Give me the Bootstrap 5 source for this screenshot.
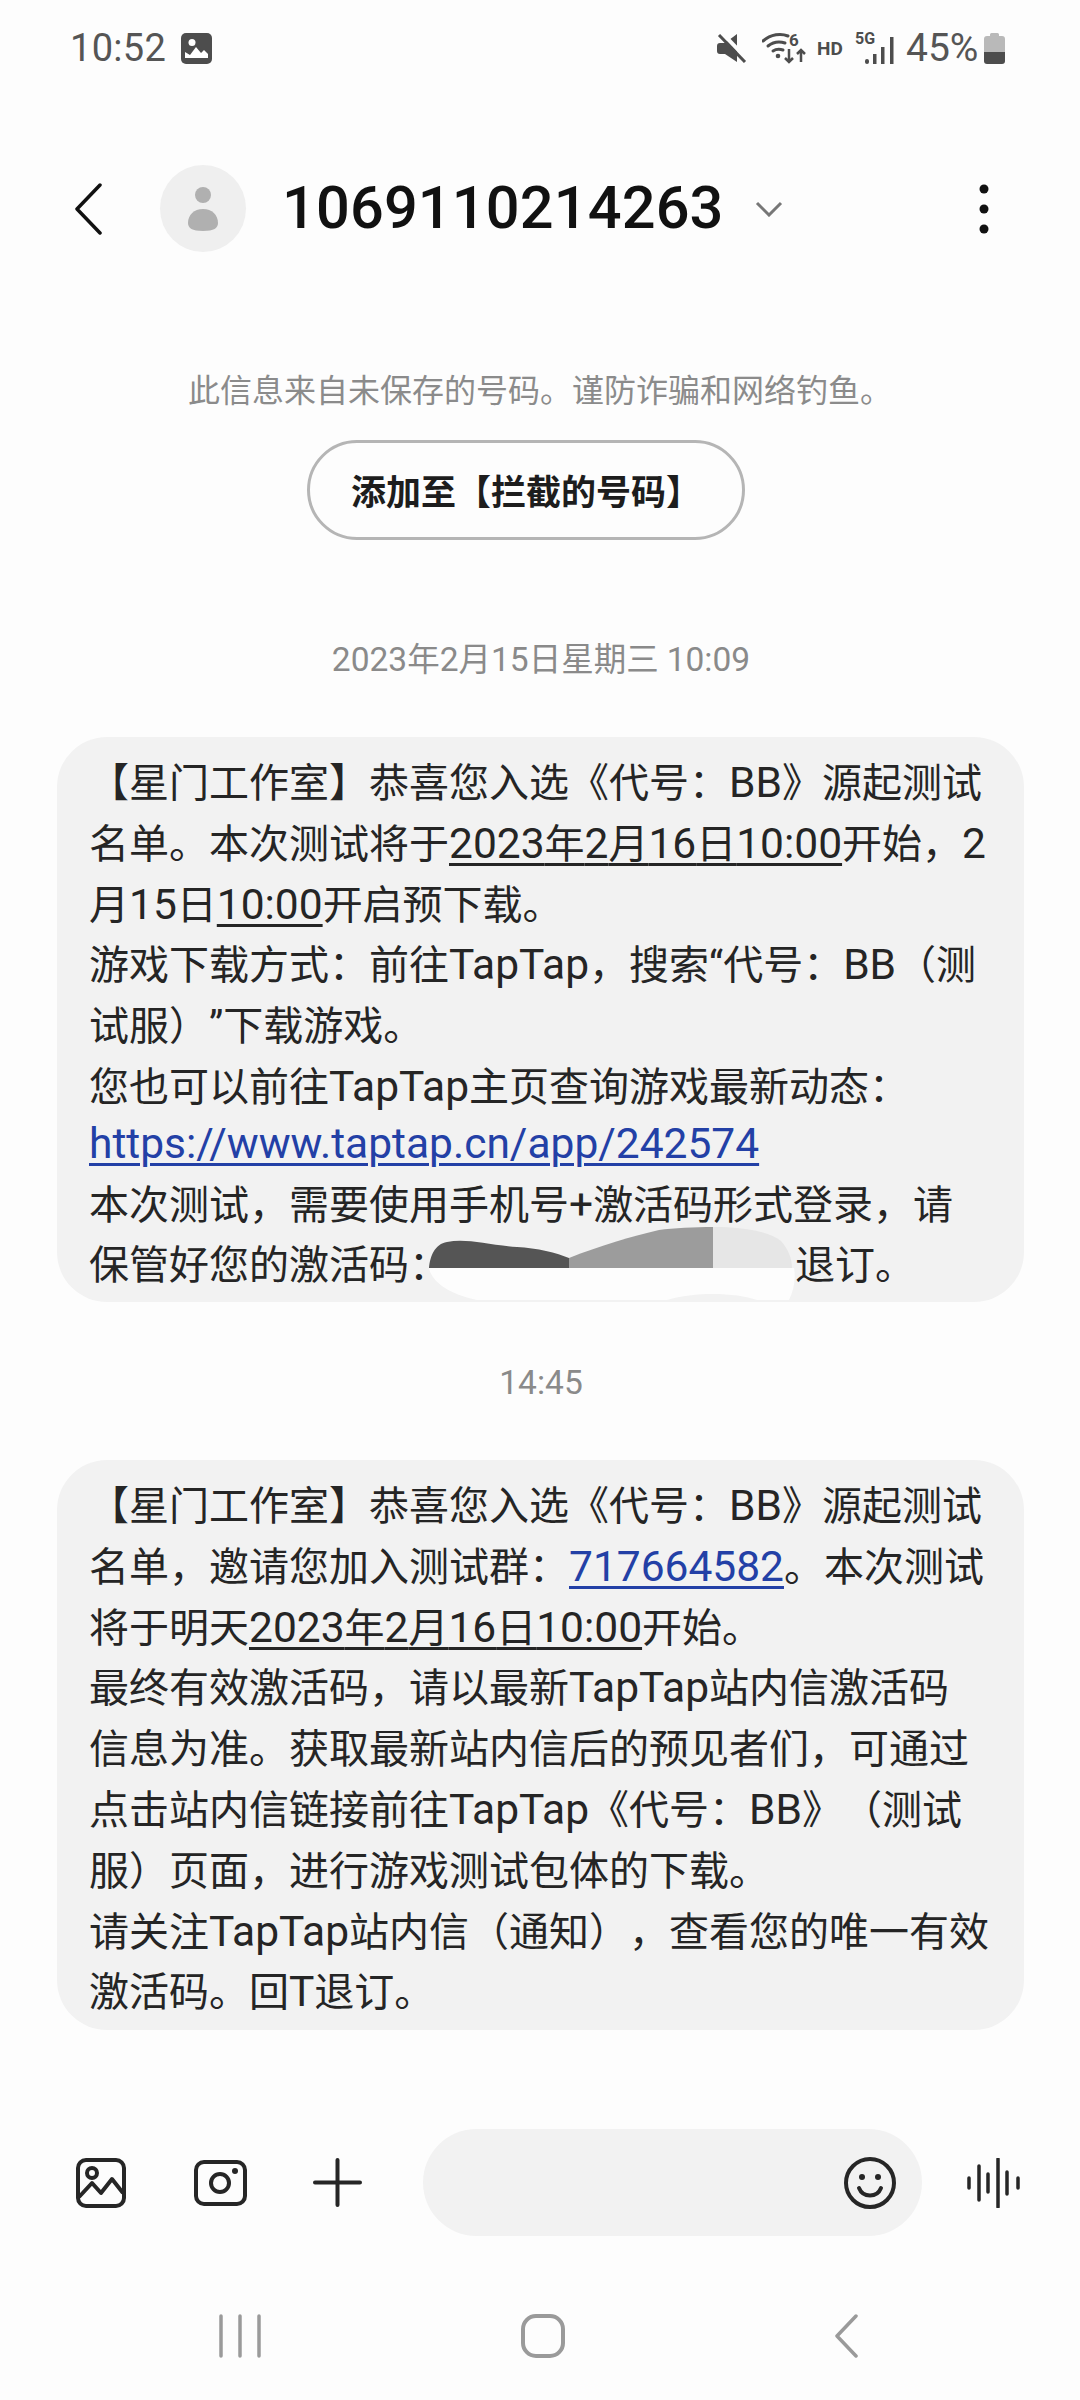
<!DOCTYPE html>
<html lang="zh-CN">
<head>
<meta charset="utf-8">
<link rel="stylesheet" href="https://cdn.jsdelivr.net/npm/bootstrap@5.3.0/dist/css/bootstrap.min.css">
<style>
html,body{margin:0;background:#fdfdfd;}
body{width:1080px;height:2400px;overflow:hidden;font-family:Roboto,"Noto Sans CJK SC",sans-serif;color:#252525;text-spacing-trim:space-all;}
svg{display:block;flex:none;}
.status-row{height:96px;padding-left:70px;padding-right:75px;color:#555;}
.status-time{font-size:38px;line-height:1;width:88px;margin-top:-1px;letter-spacing:.3px;}
.status-pct{font-size:39px;line-height:1;width:69px;}
.head-row{height:87px;margin-top:69px;padding-left:74px;}
.avatar-dot{width:86px;height:87px;background:#efefef;margin-left:58px;}
.head-title{font-size:59.5px;font-weight:500;line-height:1;color:#111;margin-left:36px;width:439px;letter-spacing:.15px;}
.warn-text{margin-top:119px;font-size:32px;line-height:40px;color:#8b8b8b;text-align:center;}
.block-wrap{margin-top:29px;padding-left:307px;}
.block-btn{width:438px;height:100px;border:3px solid #b5b5b5;border-radius:50px;background:#fdfdfd;font-size:35px;font-weight:700;color:#1d1d1d;padding:9px 0 0;}
.stamp{font-size:32.500px;line-height:40px;color:#8a8a8a;text-align:center;padding:2px 0 0 2px;margin-bottom:-2px;}
.stamp .latin-run{font-size:33.500px;}
.stamp-one{margin-top:98px;}
.stamp-two{margin-top:59px;}
.bubble{margin:59px 56px 0 57px;padding:17px 10px 0 32px;border-radius:50px;background:#f2f2f2;font-size:40px;line-height:60.8px;white-space:nowrap;height:565px;}
.bubble-two{height:570px;}
.latin-run{font-size:42.500px;line-height:0;}
.sms-tail{margin-top:-4px;}
.bubble u{text-underline-offset:5px;text-decoration-thickness:3px;}
.sms-link{color:#2340a6;text-underline-offset:5px;text-decoration-thickness:3px;}
.scribble{position:absolute;left:0;top:0;}
.compose-row{margin-top:99px;height:107px;padding-left:76px;}
.compose-field{width:499px;height:107px;background:#f2f2f2;border-radius:54px;padding-right:26px;margin-left:61px;}
.nav-row{margin-top:78px;height:44px;padding-left:218px;}
</style>
</head>
<body>
<div class="position-relative" style="height:2400px">
  <div class="status-row d-flex align-items-center">
    <span class="status-time">10:52</span>
    <svg style="margin-left:23px" width="31" height="31" viewBox="0 0 31 31"><rect width="31" height="31" rx="5" fill="#4d4d4d"/><circle cx="11" cy="9.500" r="3.500" fill="#fff"/><path d="M4 25v-6l5 3 6-8 5 6 3-3 4 4v4z" fill="#fff"/></svg>
    <div class="flex-grow-1"></div>
    <svg width="30" height="29" viewBox="0 0 30 29"><path d="M0 12a3 3 0 0 1 3-3h5L20 0v28L8 20H3a3 3 0 0 1-3-3z" fill="#4d4d4d"/><path d="M6 0l24 25" stroke="#fdfdfd" stroke-width="4"/><path d="M2 1l26 27" stroke="#4d4d4d" stroke-width="3"/></svg>
    <svg style="margin-left:15px" width="45" height="32" viewBox="0 0 45 32"><g fill="none" stroke="#4d4d4d" stroke-width="3" stroke-linecap="round"><path d="M1 9C9 2 19 1 26 4"/><path d="M6 14c5-4 11-5 17-3"/><path d="M11 19c3-2 7-2 10-1"/></g><circle cx="16" cy="24" r="2.300" fill="#4d4d4d"/><text x="27" y="14" font-size="17" font-weight="700" fill="#4d4d4d" font-family="Roboto">6</text><path d="M27 17v13m-4-4 4 4 4-4M39 30V18m-4 4 4-4 4 4" fill="none" stroke="#4d4d4d" stroke-width="2.500"/></svg>
    <span style="margin-left:10px;width:27px;font-size:19px;font-weight:700;line-height:1;color:#4d4d4d">HD</span>
    <div class="position-relative" style="margin-left:12px;width:38px;height:31px">
      <span class="position-absolute" style="left:-1px;top:-2px;font-size:16px;font-weight:700;line-height:1;color:#4d4d4d">5G</span>
      <svg class="position-absolute" style="left:9px;top:4px" width="29" height="27" viewBox="0 0 29 27"><g fill="#4d4d4d"><rect y="22" width="4" height="5" rx="2"/><rect x="8" y="17" width="3.500" height="10"/><rect x="16" y="10" width="3.500" height="17"/><rect x="25" width="3.500" height="27"/></g></svg>
    </div>
    <span class="status-pct" style="margin-left:12px">45%</span>
    <svg style="margin-left:9px" width="21" height="31" viewBox="0 0 21 31"><path d="M6 3V1.500A1.500 1.500 0 0 1 7.500 0h6A1.500 1.500 0 0 1 15 1.500V3h3a3 3 0 0 1 3 3v14H0V6a3 3 0 0 1 3-3z" fill="#b9b9b9"/><path d="M0 19h21v9a3 3 0 0 1-3 3H3a3 3 0 0 1-3-3z" fill="#4d4d4d"/></svg>
  </div>

  <div class="head-row d-flex align-items-center">
    <svg width="28" height="52" viewBox="0 0 28 52"><path d="M26 2 3 26l23 24" fill="none" stroke="#111" stroke-width="3.500" stroke-linecap="round" stroke-linejoin="round"/></svg>
    <div class="avatar-dot rounded-circle d-flex align-items-center justify-content-center">
      <svg width="32" height="44" viewBox="0 0 32 44"><g fill="#b0b0b0"><circle cx="16" cy="8" r="8"/><path d="M16 22c9 0 15 6 15 14 0 5-4 8-15 8S1 41 1 36c0-8 6-14 15-14z"/></g></svg>
    </div>
    <div class="head-title">1069110214263</div>
    <svg style="margin-left:34px" width="28" height="16" viewBox="0 0 28 16"><path d="M2 2l12 12L26 2" fill="none" stroke="#777" stroke-width="3"/></svg>
    <svg style="margin-left:196px" width="10" height="50" viewBox="0 0 10 50"><g fill="#111"><circle cx="5" cy="5" r="4.500"/><circle cx="5" cy="25" r="4.500"/><circle cx="5" cy="45" r="4.500"/></g></svg>
  </div>

  <div class="warn-text">此信息来自未保存的号码。谨防诈骗和网络钓鱼。</div>
  <div class="block-wrap"><button type="button" class="btn block-btn">添加至【拦截的号码】</button></div>

  <div class="stamp stamp-one"><span class="latin-run">2023</span>年<span class="latin-run">2</span>月<span class="latin-run">15</span>日星期三 <span class="latin-run">10:09</span></div>

  <div class="bubble position-relative">
    【星门工作室】恭喜您入选《代号：<span class="latin-run">BB</span>》源起测试<br>
    名单。本次测试将于<u><span class="latin-run">2023</span>年<span class="latin-run">2</span>月<span class="latin-run">16</span>日<span class="latin-run">10:00</span></u>开始，<span class="latin-run">2</span><br>
    月<span class="latin-run">15</span>日<u><span class="latin-run">10:00</span></u>开启预下载。<br>
    游戏下载方式：前往<span class="latin-run">TapTap</span>，搜索“代号：<span class="latin-run">BB</span>（测<br>
    试服）”下载游戏。<br>
    您也可以前往<span class="latin-run">TapTap</span>主页查询游戏最新动态：
    <div class="sms-tail">
    <a class="sms-link latin-run" href="#">https://www.taptap.cn/app/242574</a><br>
    本次测试，需要使用手机号<span class="latin-run">+</span>激活码形式登录，请<br>
    保管好您的激活码：<span class="d-inline-block" style="width:346px"></span>退订。
    </div>
    <svg class="scribble" width="967" height="565" viewBox="0 0 967 565"><path d="M372 531c1-12 6-24 18-26 20-4 40 3 70 5 20 1 40 6 52 11v10z" fill="#555"/><path d="M512 521c30-12 64-22 90-28 14-2 36-3 54-3v41H512z" fill="#9c9c9c"/><path d="M656 490c30 0 55 4 68 14 7 8 11 17 11 27h-79z" fill="#e6e6e6"/><path d="M372 531h365c2 10 0 22-5 32H700c-20-7-60-9-90 0H420c-30-6-46-20-48-32z" fill="#fdfdfd"/></svg>
  </div>

  <div class="stamp stamp-two"><span class="latin-run">14:45</span></div>

  <div class="bubble bubble-two">
    【星门工作室】恭喜您入选《代号：<span class="latin-run">BB</span>》源起测试<br>
    名单，邀请您加入测试群：<a class="sms-link latin-run" href="#">717664582</a>。本次测试<br>
    将于明天<u><span class="latin-run">2023</span>年<span class="latin-run">2</span>月<span class="latin-run">16</span>日<span class="latin-run">10:00</span></u>开始。<br>
    最终有效激活码，请以最新<span class="latin-run">TapTap</span>站内信激活码<br>
    信息为准。获取最新站内信后的预见者们，可通过<br>
    点击站内信链接前往<span class="latin-run">TapTap</span>《代号：<span class="latin-run">BB</span>》（测试<br>
    服）页面，进行游戏测试包体的下载。<br>
    请关注<span class="latin-run">TapTap</span>站内信（通知），查看您的唯一有效<br>
    激活码。回<span class="latin-run">T</span>退订。
  </div>

  <div class="compose-row d-flex align-items-center">
    <svg width="50" height="50" viewBox="0 0 50 50"><g fill="none" stroke="#262626" stroke-width="4" stroke-linejoin="round"><rect x="2" y="2" width="46" height="46" rx="8"/><circle cx="16" cy="15" r="5"/><path d="M3 39l13-14 9 10 11-14 11 14"/></g></svg>
    <svg style="margin-left:68px" width="53" height="46" viewBox="0 0 53 46"><g fill="none" stroke="#262626" stroke-width="4"><rect x="2" y="2" width="49" height="42" rx="8"/><circle cx="26" cy="23" r="9"/></g><circle cx="41" cy="11" r="3" fill="#262626"/></svg>
    <svg style="margin-left:66px" width="49" height="49" viewBox="0 0 49 49"><path d="M24.500 2v45M2 24.500h45" stroke="#262626" stroke-width="4" stroke-linecap="round"/></svg>
    <div class="compose-field d-flex align-items-center justify-content-end">
      <svg width="52" height="52" viewBox="0 0 52 52"><g fill="none" stroke="#262626" stroke-width="4"><circle cx="26" cy="26" r="24"/><path d="M15 31c4 10 18 10 22 0" stroke-linecap="round"/></g><circle cx="18" cy="20" r="3" fill="#262626"/><circle cx="34" cy="20" r="3" fill="#262626"/></svg>
    </div>
    <svg style="margin-left:45px" width="53" height="50" viewBox="0 0 53 50"><path d="M2 20v10M12 8v34M21 16v18M31 1v48M40 14v22M51 20v10" stroke="#262626" stroke-width="3.500" stroke-linecap="round"/></svg>
  </div>

  <div class="nav-row d-flex align-items-center">
    <svg width="44" height="44" viewBox="0 0 44 44"><path d="M3 2v40M22 2v40M41 2v40" stroke="#9a9a9a" stroke-width="3.500" stroke-linecap="round"/></svg>
    <svg style="margin-left:259px" width="44" height="44" viewBox="0 0 44 44"><rect x="2" y="2" width="40" height="40" rx="13" fill="none" stroke="#9a9a9a" stroke-width="4"/></svg>
    <svg style="margin-left:269px" width="24" height="44" viewBox="0 0 24 44"><path d="M22 2 3 22l19 20" fill="none" stroke="#9a9a9a" stroke-width="3.500" stroke-linecap="round" stroke-linejoin="round"/></svg>
  </div>
</div>
</body>
</html>
